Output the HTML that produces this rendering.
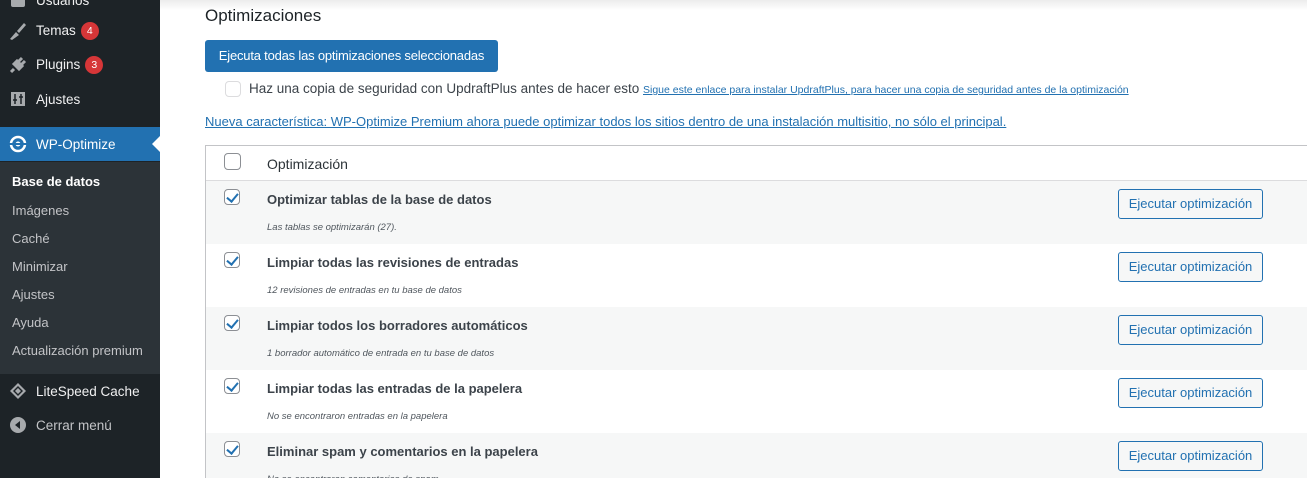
<!DOCTYPE html>
<html style="overflow:hidden;height:478px"><head><meta charset="utf-8"><style>
*{box-sizing:border-box;margin:0;padding:0}
body{width:1307px;height:478px;overflow:hidden;font-family:"Liberation Sans",sans-serif;background:#fff;position:relative}
#side{position:absolute;left:0;top:0;width:160px;height:478px;background:#1d2327;color:#f0f0f1}
.mi{position:absolute;left:0;width:160px;height:34px;font-size:13.5px;display:flex;align-items:center}
.mi .ic{position:absolute;left:9px;width:18px;height:18px}
.mi .t{position:absolute;left:36px}
.badge{display:inline-block;background:#d63638;color:#fff;border-radius:9px;width:18px;height:18px;font-size:10.5px;text-align:center;line-height:18px;margin-left:5px;vertical-align:1px}
#sub{position:absolute;left:0;top:162px;width:160px;height:212px;background:#2c3338}
#sub div{position:absolute;left:12px;font-size:13px;color:#c3c4c7}
.shadow{position:absolute;left:160px;right:0;top:0;height:10px;background:linear-gradient(#ececec,#fff)}
h2{position:absolute;left:205px;top:6px;font-size:17px;font-weight:normal;color:#1d2327}
.btn{position:absolute;left:205px;top:40px;width:293px;height:32px;background:#2271b1;color:#fff;border-radius:3px;font-size:13px;line-height:32px;text-align:center;letter-spacing:-0.2px}
.cb{position:absolute;width:16px;height:16px;border:1px solid #8c8f94;border-radius:4px;background:#fff}
a{color:#2271b1;text-decoration:underline}
.tbl{position:absolute;left:205px;top:145px;right:0;height:333px;overflow:hidden;border-left:1px solid #c3c4c7;border-top:1px solid #c3c4c7}
.row{position:absolute;left:0;right:0;height:63px}
.row b{position:absolute;left:61px;top:11px;font-size:13px;color:#3c434a}
.row i{position:absolute;left:61px;top:41px;font-size:9.5px;color:#50575e}
.row .cb{left:18px;top:8px}
.row .eb{position:absolute;left:912px;top:8px;width:145px;height:30px;border:1px solid #2271b1;border-radius:3px;color:#2271b1;font-size:13px;text-align:center;line-height:28px;background:#f6f7f7}
.chk::after{content:"";position:absolute;left:4px;top:1px;width:5px;height:9px;border:solid #2271b1;border-width:0 2px 2px 0;transform:rotate(40deg)}
</style></head><body>
<div id="side">
<div class="mi" style="top:-17px"><svg class="ic" viewBox="0 0 18 18"><rect x="2" y="2" width="14" height="14" rx="2" fill="#a7aaad"/></svg><span class="t">Usuarios</span></div>
<div class="mi" style="top:14px"><svg class="ic" viewBox="0 0 18 18"><path d="M1 17l6-7 3 3-7 5zM8 9l7-8 2 2-7 8z" fill="#a7aaad"/></svg><span class="t">Temas<span class="badge">4</span></span></div>
<div class="mi" style="top:48px"><svg class="ic" viewBox="0 0 18 18"><path d="M2 16l3-3M5 8l5 5 3-3-5-5zM10 5l3-3M13 8l3-3" stroke="#a7aaad" stroke-width="3" fill="#a7aaad"/></svg><span class="t">Plugins<span class="badge">3</span></span></div>
<div class="mi" style="top:82px"><svg class="ic" viewBox="0 0 18 18"><rect x="2" y="2" width="14" height="14" fill="#a7aaad"/><path d="M6 4v10M12 4v10M4 10h4M10 7h4" stroke="#1d2327" stroke-width="1.5"/></svg><span class="t">Ajustes</span></div>
<div class="mi" style="top:127px;height:34px;background:#2271b1;color:#fff"><svg class="ic" viewBox="0 0 18 18"><circle cx="9" cy="9" r="7" fill="none" stroke="#fff" stroke-width="2.5"/><circle cx="9" cy="9" r="2.5" fill="#fff"/><rect x="0" y="8" width="18" height="2" fill="#2271b1"/></svg><span class="t">WP-Optimize</span>
<span style="position:absolute;right:0;top:9px;border:8px solid transparent;border-right-color:#fff"></span></div>
<div id="sub">
<div style="top:12px;color:#fff;font-weight:bold">Base de datos</div>
<div style="top:41px">Imágenes</div>
<div style="top:69px">Caché</div>
<div style="top:97px">Minimizar</div>
<div style="top:125px">Ajustes</div>
<div style="top:153px">Ayuda</div>
<div style="top:181px">Actualización premium</div>
</div>
<div class="mi" style="top:374px"><svg class="ic" viewBox="0 0 18 18"><path d="M9 1l8 8-8 8-8-8z" fill="#a7aaad"/><path d="M9 4l5 5-5 5-5-5z" fill="#1d2327"/><path d="M9 6l3 3-3 3-3-3z" fill="#a7aaad"/></svg><span class="t">LiteSpeed Cache</span></div>
<div class="mi" style="top:408px;color:#c3c4c7"><svg class="ic" viewBox="0 0 18 18"><circle cx="9" cy="9" r="8" fill="#a7aaad"/><path d="M11 5l-5 4 5 4z" fill="#1d2327"/></svg><span class="t">Cerrar menú</span></div>
</div>
<div class="shadow"></div>
<h2>Optimizaciones</h2>
<div class="btn">Ejecuta todas las optimizaciones seleccionadas</div>
<div class="cb" style="left:225px;top:81px;border-color:#dcdcde"></div>
<div style="position:absolute;left:249px;top:81px;font-size:13.5px;color:#3c434a;white-space:nowrap">Haz una copia de seguridad con UpdraftPlus antes de hacer esto <a style="font-size:10.5px">Sigue este enlace para instalar UpdraftPlus, para hacer una copia de seguridad antes de la optimización</a></div>
<div style="position:absolute;left:205px;top:114px;font-size:13px;white-space:nowrap"><a>Nueva característica: WP-Optimize Premium ahora puede optimizar todos los sitios dentro de una instalación multisitio, no sólo el principal.</a></div>
<div class="tbl">
<div class="row" style="top:0;height:35px;background:#fff;border-bottom:1px solid #dcdcde"><div class="cb" style="left:18px;top:7px;width:17px;height:17px"></div><span style="position:absolute;left:61px;top:10px;font-size:14px;color:#2c3338">Optimización</span></div>
<div class="row" style="top:35px;background:#f6f7f7"><div class="cb chk"></div><b>Optimizar tablas de la base de datos</b><i>Las tablas se optimizarán (27).</i><div class="eb">Ejecutar optimización</div></div>
<div class="row" style="top:98px;background:#fff"><div class="cb chk"></div><b>Limpiar todas las revisiones de entradas</b><i>12 revisiones de entradas en tu base de datos</i><div class="eb">Ejecutar optimización</div></div>
<div class="row" style="top:161px;background:#f6f7f7"><div class="cb chk"></div><b>Limpiar todos los borradores automáticos</b><i>1 borrador automático de entrada en tu base de datos</i><div class="eb">Ejecutar optimización</div></div>
<div class="row" style="top:224px;background:#fff"><div class="cb chk"></div><b>Limpiar todas las entradas de la papelera</b><i>No se encontraron entradas en la papelera</i><div class="eb">Ejecutar optimización</div></div>
<div class="row" style="top:287px;background:#f6f7f7"><div class="cb chk"></div><b>Eliminar spam y comentarios en la papelera</b><i>No se encontraron comentarios de spam</i><div class="eb">Ejecutar optimización</div></div>
</div>
</body></html>
